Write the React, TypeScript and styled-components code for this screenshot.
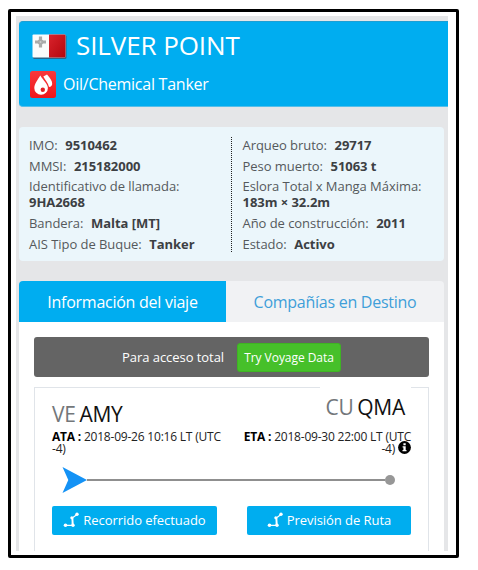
import React from "react";
import styled, { createGlobalStyle } from "styled-components";

const Global = createGlobalStyle`
  * { box-sizing: border-box; }
  body { margin: 0; background: #fff; font-family: "Open Sans", "Noto Sans", sans-serif; }
`;

const Stage = styled.div`
  width: 478px;
  height: 570px;
  padding: 9px 0 0 8px;
  overflow: hidden;
`;
const Frame = styled.div`
  width: 451px;
  height: 549px;
  border: 3px solid #000;
  border-radius: 2px;
  padding: 4px 8px 4px 5px;
`;
const Page = styled.div`
  height: 535px;
  background: #e5e6e8;
  padding: 5px 0 0 3px;
  display: flex;
  flex-direction: column;
`;
const Header = styled.header`
  height: 86px;
  flex: none;
  background: #00adf0;
  border-top: 1px solid #1c9fd4;
  border-bottom: 1px solid #55bfea;
  border-radius: 4px 0 0 4px;
  padding: 6px 0 0 11px;
  color: #fff;
`;
const HeaderRow = styled.div<{ $h: number; $gap: number; $indent: number }>`
  display: flex;
  align-items: center;
  height: ${(p) => p.$h}px;
  gap: ${(p) => p.$gap}px;
  padding-left: ${(p) => p.$indent}px;
  svg { flex: none; }
`;
const ShipName = styled.h1`
  margin: 0;
  padding-bottom: 3px;
  font-size: 26px;
  letter-spacing: -0.1px;
  font-weight: 400;
  line-height: 36px;
  white-space: nowrap;
`;
const ShipType = styled.div`
  font-size: 16px;
  letter-spacing: -0.25px;
  line-height: 24px;
  padding-bottom: 1px;
  white-space: nowrap;
`;
const InfoPanel = styled.section`
  width: 425px;
  height: 134px;
  flex: none;
  margin-top: 20px;
  padding: 10px 0 9px 10px;
  display: grid;
  grid-template-columns: 203px 1fr;
  background: #ebf6fb;
  border-radius: 4px;
`;
const InfoColumn = styled.div<{ $divided?: boolean }>`
  display: flex;
  flex-direction: column;
  gap: 4.7px;
  border-right: ${(p) => (p.$divided ? "1px dotted #222" : "0")};
  padding-left: ${(p) => (p.$divided ? 0 : 10.5)}px;
`;
const Field = styled.div`
  font-size: 13px;
  line-height: 16px;
  color: #55595c;
  white-space: nowrap;
  letter-spacing: -0.05px;
  b { color: #3c4043; font-weight: 700; letter-spacing: -0.04px; }
`;
const Gap = styled.span`
  display: inline-block;
  width: 7.6px;
`;
const Tabs = styled.nav`
  width: 425px;
  height: 41px;
  flex: none;
  margin-top: 20px;
  display: grid;
  grid-template-columns: 207px 218px;
  border-radius: 4px 4px 0 0;
  overflow: hidden;
`;
const Tab = styled.div<{ $active?: boolean }>`
  display: flex;
  align-items: center;
  justify-content: center;
  font-size: 16px;
  letter-spacing: -0.26px;
  white-space: nowrap;
  color: ${(p) => (p.$active ? "#fff" : "#3f9fd9")};
  background: ${(p) => (p.$active ? "#00adf0" : "#f1f2f4")};
`;
const Body = styled.main`
  width: 425px;
  flex: 1;
  background: #fff;
  padding: 15px 15px 0;
  display: flex;
  flex-direction: column;
`;
const Promo = styled.div`
  height: 40px;
  flex: none;
  background: #646464;
  border-radius: 3px;
  display: flex;
  align-items: center;
  padding-left: 88px;
  gap: 13px;
  color: #fff;
  font-size: 13px;
  letter-spacing: -0.05px;
  white-space: nowrap;
`;
const PromoLabel = styled.span`
  width: 102px;
  padding-bottom: 1px;
`;
const PromoButton = styled.div`
  width: 104px;
  height: 29px;
  border-radius: 3px;
  background: #46c02a;
  border: 1px solid #3eb423;
  display: flex;
  align-items: center;
  justify-content: center;
  font-size: 12px;
`;
const Voyage = styled.section`
  flex: 1;
  margin-top: 10px;
  border: 1px solid #e0e4e9;
  border-bottom: 0;
  padding: 0 17px;
`;
const Ports = styled.div`
  display: flex;
  justify-content: space-between;
  height: 79px;
`;
const Port = styled.div<{ $end?: boolean }>`
  width: ${(p) => (p.$end ? 170 : 175)}px;
  text-align: ${(p) => (p.$end ? "right" : "left")};
`;
const PortName = styled.div<{ $end?: boolean }>`
  margin-top: ${(p) => (p.$end ? -1 : 0)}px;
  padding-top: ${(p) => (p.$end ? 7 : 13)}px;
  padding-right: ${(p) => (p.$end ? 6 : 0)}px;
  margin-left: ${(p) => (p.$end ? 79 : 0)}px;
  height: ${(p) => (p.$end ? 44 : 43)}px;
  font-size: 21px;
  letter-spacing: -0.25px;
  word-spacing: -1.5px;
  line-height: 26px;
  color: #111;
  background: #fff;
  white-space: nowrap;
  span { color: #73777a; }
`;
const Times = styled.div`
  font-size: 12px;
  line-height: 12px;
  color: #222;
  white-space: nowrap;
  letter-spacing: -0.21px;
  b { color: #000; }
  svg { margin-top: -2px; vertical-align: -1px; }
`;
const Track = styled.div`
  height: 26px;
  display: flex;
  align-items: center;
  padding: 0 16px 0 10px;
`;
const Line = styled.div`
  flex: 1;
  height: 2px;
  background: #8f8f8f;
`;
const Dot = styled.div`
  width: 10px;
  height: 10px;
  border-radius: 50%;
  background: #979797;
`;
const Actions = styled.div`
  display: flex;
  justify-content: space-between;
  margin-top: 13px;
`;
const Action = styled.div<{ $width: number }>`
  width: ${(p) => p.$width}px;
  height: 29px;
  border-radius: 2px;
  background: #00adef;
  color: #fff;
  font-size: 13px;
  letter-spacing: -0.05px;
  display: flex;
  align-items: center;
  justify-content: center;
  gap: 4px;
  padding-bottom: 1px;
  white-space: nowrap;
`;

const Flag = () => (
  <svg width="35" height="25" viewBox="0 0 35 25">
    <defs>
      <linearGradient id="flagRed" x1="0" y1="0" x2="1" y2="1">
        <stop offset="0" stopColor="#d9232c" />
        <stop offset="1" stopColor="#b3060d" />
      </linearGradient>
    </defs>
    <rect x="1" y="1" width="33.500" height="24" rx="1.500" fill="#354e66" opacity=".75" />
    <rect x="0.500" y="0.500" width="33" height="23" rx="1" fill="#fbfbfb" />
    <path d="M17 .5h15.500a1 1 0 0 1 1 1v21a1 1 0 0 1-1 1H17z" fill="url(#flagRed)" />
    <path d="M8.500 2.500v11M3 8h11" stroke="#aaa" strokeWidth="3.200" />
    <circle cx="8.500" cy="8" r="2.800" fill="#aaa" />
    <circle cx="8.500" cy="8" r="1" fill="#ccc" />
  </svg>
);

const Drops = () => (
  <svg width="26" height="27" viewBox="0 0 26 27">
    <defs>
      <linearGradient id="dropRed" x1="0" y1="0" x2="0" y2="1">
        <stop offset="0" stopColor="#f8383c" />
        <stop offset="1" stopColor="#ee171c" />
      </linearGradient>
    </defs>
    <rect width="26" height="27" rx="2.500" fill="url(#dropRed)" />
    <path d="M10.300 4.500C7.500 9 4.300 13 4.300 17a6.800 6.800 0 0 0 13.600 0C17.900 13 13 9 10.300 4.500z" fill="#fff" />
    <path d="M13.300 5.500L17 3.500C20 7 22.500 10 22.200 13c-.2 2-1.800 3.200-3.300 2.800C18.300 12 15 8.700 13.300 5.500z" fill="#fff" />
    <circle cx="12.800" cy="18.700" r="2.200" fill="#df2025" />
  </svg>
);

const Ship = () => (
  <svg width="25" height="26" viewBox="0 0 25 26">
    <path d="M.5 0L25 13 .5 26l5.800-13z" fill="#1492f5" />
  </svg>
);

const Route = () => (
  <svg width="16" height="16" viewBox="0 0 16 16" fill="#fff" stroke="#fff">
    <path d="M2.500 13.300H10L9.200 6l4.800-3.500" fill="none" strokeWidth="1.200" />
    <path d="M9.500 6v7" strokeWidth="1.800" />
    <g stroke="none">
      <circle cx="2.500" cy="13.300" r="1.800" />
      <circle cx="10" cy="13.200" r="1.700" />
      <circle cx="8.800" cy="5.800" r="1.500" />
      <circle cx="14" cy="2.300" r="1.700" />
    </g>
  </svg>
);

const InfoIcon = () => (
  <svg width="13" height="13" viewBox="0 0 13 13">
    <circle cx="6.500" cy="6.500" r="6.400" fill="#000" />
    <path d="M5.400 2.300h2.300v1.900H5.400zM4.600 5.200h3.100v3.700h.8v1.400h-4V8.900h.9V6.600h-.8z" fill="#fff" />
  </svg>
);

type Item = { label: string; value: string; wrap?: boolean };
const left: Item[] = [
  { label: "IMO:", value: "9510462" },
  { label: "MMSI:", value: "215182000" },
  { label: "Identificativo de llamada:", value: "9HA2668", wrap: true },
  { label: "Bandera:", value: "Malta [MT]" },
  { label: "AIS Tipo de Buque:", value: "Tanker" },
];
const right: Item[] = [
  { label: "Arqueo bruto:", value: "29717" },
  { label: "Peso muerto:", value: "51063 t" },
  { label: "Eslora Total x Manga Máxima:", value: "183m × 32.2m", wrap: true },
  { label: "Año de construcción:", value: "2011" },
  { label: "Estado:", value: "Activo" },
];

const Fields = ({ items }: { items: Item[] }) => (
  <>
    {items.map((i) => (
      <Field key={i.label}>
        {i.label}
        {i.wrap ? <br /> : <Gap />}
        <b>{i.value}</b>
      </Field>
    ))}
  </>
);

export default function App() {
  return (
    <Stage>
      <Global />
      <Frame>
        <Page>
          <Header>
            <HeaderRow $h={36} $gap={9} $indent={2}>
              <Flag />
              <ShipName>SILVER POINT</ShipName>
            </HeaderRow>
            <HeaderRow $h={41} $gap={7} $indent={0}>
              <Drops />
              <ShipType>Oil/Chemical Tanker</ShipType>
            </HeaderRow>
          </Header>
          <InfoPanel>
            <InfoColumn $divided>
              <Fields items={left} />
            </InfoColumn>
            <InfoColumn>
              <Fields items={right} />
            </InfoColumn>
          </InfoPanel>
          <Tabs>
            <Tab $active>Información del viaje</Tab>
            <Tab>Compañías en Destino</Tab>
          </Tabs>
          <Body>
            <Promo>
              <PromoLabel>Para acceso total</PromoLabel>
              <PromoButton>Try Voyage Data</PromoButton>
            </Promo>
            <Voyage>
              <Ports>
                <Port>
                  <PortName>
                    <span>VE</span> AMY
                  </PortName>
                  <Times>
                    <b>ATA :</b> 2018-09-26 10:16 LT (UTC
                    <br />
                    -4)
                  </Times>
                </Port>
                <Port $end>
                  <PortName $end>
                    <span>CU</span> QMA
                  </PortName>
                  <Times>
                    <b>ETA :</b> 2018-09-30 22:00 LT (UTC
                    <br />
                    -4) <InfoIcon />
                  </Times>
                </Port>
              </Ports>
              <Track>
                <Ship />
                <Line />
                <Dot />
              </Track>
              <Actions>
                <Action $width={165}>
                  <Route />
                  Recorrido efectuado
                </Action>
                <Action $width={164}>
                  <Route />
                  Previsión de Ruta
                </Action>
              </Actions>
            </Voyage>
          </Body>
        </Page>
      </Frame>
    </Stage>
  );
}
